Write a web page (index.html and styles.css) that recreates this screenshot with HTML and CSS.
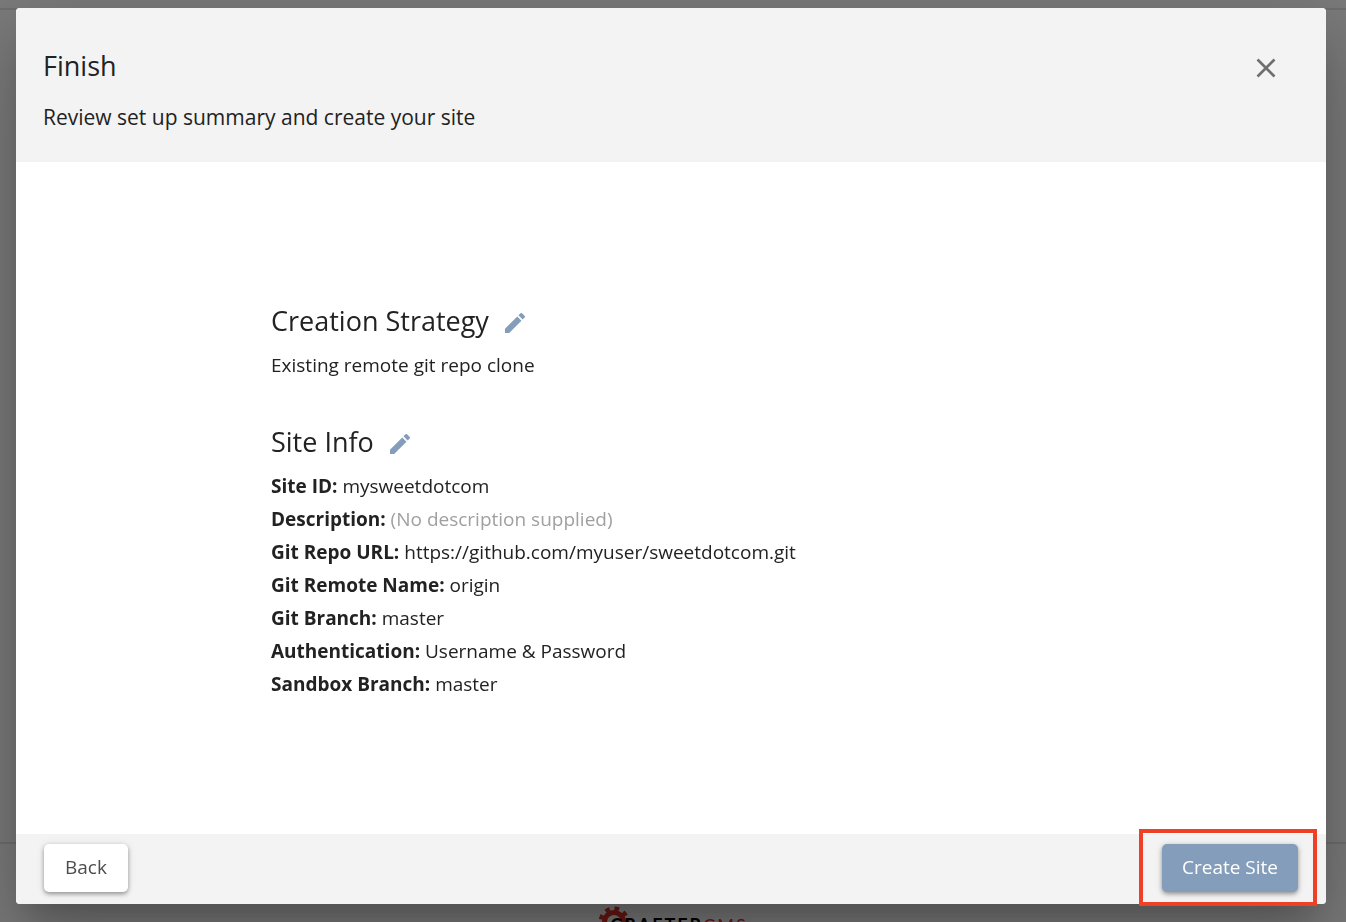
FILE: index.html
```html
<!DOCTYPE html>
<html lang="en">
<head>
<meta charset="utf-8">
<meta name="viewport" content="width=device-width, initial-scale=1">
<title>Create Site</title>
<link rel="stylesheet" href="styles.css">
</head>
<body>
<div class="page" aria-hidden="true">
  <div class="page-main"></div>
  <div class="page-footer">
    <div class="brand">
      <svg class="brand-gear" viewBox="0 0 32 32" width="32" height="32">
        <g fill="none" stroke="#6b1713">
          <circle cx="16" cy="16" r="9.5" stroke-width="5"/>
          <circle cx="16" cy="16" r="13.5" stroke-width="4" stroke-dasharray="4.6 4.83" stroke-dashoffset="2.3"/>
        </g>
      </svg>
      <span class="brand-name">CRAFTER<span class="brand-cms">CMS</span></span>
    </div>
  </div>
</div>

<div class="overlay">
  <section class="dialog" role="dialog" aria-modal="true" aria-labelledby="dialog-title">
    <header class="dialog-header">
      <div>
        <h1 class="title" id="dialog-title">Finish</h1>
        <p class="subtitle">Review set up summary and create your site</p>
      </div>
      <button class="icon-button close" type="button" aria-label="Close">
        <svg viewBox="0 0 20 20" width="20" height="20"><path d="M1.5 1.5l17 17M18.5 1.5l-17 17" fill="none" stroke="currentColor" stroke-width="2.6"/></svg>
      </button>
    </header>

    <div class="dialog-body">
      <div class="summary">
        <section class="group">
          <div class="group-heading">
            <h2 class="title">Creation Strategy</h2>
            <button class="icon-button edit" type="button" aria-label="Edit creation strategy">
              <svg viewBox="3 3 18 18" width="20" height="20"><path fill="currentColor" d="M3 17.25V21h3.75L17.81 9.94l-3.75-3.75L3 17.25zM20.71 7.04a1 1 0 0 0 0-1.41l-2.34-2.34a1 1 0 0 0-1.41 0l-1.83 1.83 3.75 3.75 1.83-1.83z"/></svg>
            </button>
          </div>
          <p class="row">Existing remote git repo clone</p>
        </section>
        <section class="group">
          <div class="group-heading">
            <h2 class="title">Site Info</h2>
            <button class="icon-button edit" type="button" aria-label="Edit site info">
              <svg viewBox="3 3 18 18" width="20" height="20"><path fill="currentColor" d="M3 17.25V21h3.75L17.81 9.94l-3.75-3.75L3 17.25zM20.71 7.04a1 1 0 0 0 0-1.41l-2.34-2.34a1 1 0 0 0-1.41 0l-1.83 1.83 3.75 3.75 1.83-1.83z"/></svg>
            </button>
          </div>
          <p class="row"><strong>Site ID:</strong> mysweetdotcom</p>
          <p class="row"><strong>Description:</strong> <span class="muted">(No description supplied)</span></p>
          <p class="row"><strong>Git Repo URL:</strong> https://github.com/myuser/sweetdotcom.git</p>
          <p class="row"><strong>Git Remote Name:</strong> origin</p>
          <p class="row"><strong>Git Branch:</strong> master</p>
          <p class="row"><strong>Authentication:</strong> Username &amp; Password</p>
          <p class="row"><strong>Sandbox Branch:</strong> master</p>
        </section>
      </div>
    </div>

    <footer class="dialog-footer">
      <button class="button" type="button">Back</button>
      <div class="highlight">
        <button class="button button-primary" type="button">Create Site</button>
      </div>
    </footer>
  </section>
</div>
</body>
</html>
```

FILE: styles.css
```css
* {
  box-sizing: border-box;
}

body {
  margin: 0;
  font-family: "Open Sans", "Noto Sans", sans-serif;
  font-size: 19px;
  color: #222;
}

h1, h2, p {
  margin: 0;
}

/* Dimmed page behind the dialog */
.page {
  display: flex;
  flex-direction: column;
  height: 100vh;
  overflow: hidden;
  padding-top: 8px;
  background: #7b7b7b;
}

.page-main {
  flex: 1;
  border: solid #6f6f6f;
  border-width: 2px 0;
}

.page-footer {
  display: flex;
  justify-content: center;
  height: 78px;
  padding-top: 62px;
}

.brand {
  display: flex;
  align-items: flex-start;
}

.brand-gear {
  flex: none;
  margin-right: -20px;
}

.brand-name {
  padding-top: 7px;
  font-family: Lato, sans-serif;
  font-size: 18px;
  font-weight: 700;
  line-height: 24px;
  letter-spacing: 2px;
  color: #000;
}

.brand-cms {
  font-weight: 400;
  color: #6b1713;
}

/* Dialog */
.overlay {
  position: fixed;
  inset: 0;
  display: flex;
  padding: 8px 20px 18px 16px;
}

.dialog {
  display: flex;
  flex: 1;
  flex-direction: column;
  border-radius: 4px;
  background: #fff;
  box-shadow:
    0 22px 30px -14px rgba(0, 0, 0, 0.2),
    0 48px 76px 6px rgba(0, 0, 0, 0.14),
    0 18px 92px 16px rgba(0, 0, 0, 0.12);
}

.dialog-header {
  display: flex;
  align-items: flex-start;
  justify-content: space-between;
  padding: 38px 40px 28px 27px;
  border-radius: 4px 4px 0 0;
  background: #f3f3f3;
}

.title {
  font-size: 27px;
  font-weight: 400;
  line-height: 40px;
}

.subtitle {
  margin-top: 14px;
  font-size: 21px;
  line-height: 34px;
}

.icon-button {
  display: flex;
  padding: 10px;
  border: 0;
  background: none;
  cursor: pointer;
}

.close {
  margin-top: 2px;
  color: #6f6f6f;
}

.edit {
  padding: 4px 8px 0;
  color: #839dba;
}

.dialog-body {
  display: flex;
  flex: 1;
  flex-direction: column;
  justify-content: center;
  align-items: center;
  padding-top: 6px;
}

.summary {
  display: flex;
  flex-direction: column;
  gap: 40px;
  width: 100%;
  max-width: 800px;
}

.group-heading {
  display: flex;
  align-items: center;
  gap: 8px;
  margin-bottom: 8px;
}

.row {
  line-height: 33px;
}

.muted {
  color: #a0a0a0;
}

.dialog-footer {
  display: flex;
  align-items: flex-start;
  justify-content: space-between;
  height: 70px;
  padding: 10px 9px 0 28px;
  border-radius: 0 0 4px 4px;
  background: #f3f3f3;
}

.button {
  height: 48px;
  padding: 0 21px 2px;
  border: 0;
  border-radius: 5px;
  background: #fff;
  box-shadow: 0 2px 4px rgba(0, 0, 0, 0.35), 0 1px 8px rgba(0, 0, 0, 0.1);
  font: inherit;
  color: #4d4d4d;
  cursor: pointer;
}

.button-primary {
  padding: 0 20px 2px;
  background: #839dba;
  color: #fff;
}

.highlight {
  display: flex;
  margin-top: -15px;
  padding: 11px 15px 10px 19px;
  border: 4px solid #ee4024;
}
```
